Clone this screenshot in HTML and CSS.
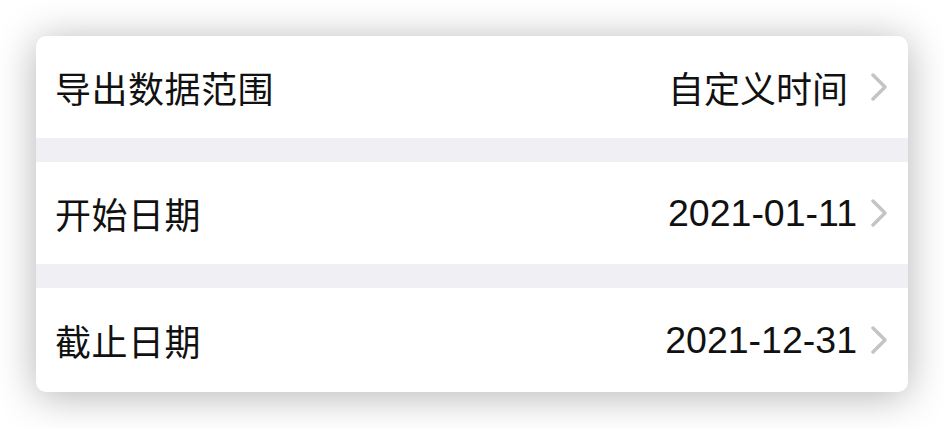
FILE: index.html
```html
<!DOCTYPE html>
<html lang="zh-CN">
<head>
<meta charset="utf-8">
<title>导出数据</title>
<link rel="stylesheet" href="styles.css">
</head>
<body>
<div class="card">
  <div class="row">
    <span class="label">导出数据范围</span>
    <span class="value">自定义时间<svg class="chev" width="18" height="28" viewBox="0 0 18 28"><path d="M3 2 L15 14 L3 26" fill="none" stroke="#c4c4c8" stroke-width="3.4" stroke-linecap="round" stroke-linejoin="round"/></svg></span>
  </div>
  <div class="gap"></div>
  <div class="row">
    <span class="label">开始日期</span>
    <span class="value num">2021-01-11<svg class="chev" width="18" height="28" viewBox="0 0 18 28"><path d="M3 2 L15 14 L3 26" fill="none" stroke="#c4c4c8" stroke-width="3.4" stroke-linecap="round" stroke-linejoin="round"/></svg></span>
  </div>
  <div class="gap"></div>
  <div class="row">
    <span class="label">截止日期</span>
    <span class="value num">2021-12-31<svg class="chev" width="18" height="28" viewBox="0 0 18 28"><path d="M3 2 L15 14 L3 26" fill="none" stroke="#c4c4c8" stroke-width="3.4" stroke-linecap="round" stroke-linejoin="round"/></svg></span>
  </div>
</div>
</body>
</html>
```
FILE: styles.css
```css
html, body {
  margin: 0;
  padding: 0;
  background: #ffffff;
}
body {
  min-height: 100vh;
  box-sizing: border-box;
  padding: 36px 36px 0 36px;
  font-family: "Liberation Sans", "Noto Sans CJK SC", sans-serif;
  color: #111111;
}
.card {
  width: 872px;
  background: #ffffff;
  border-radius: 10px;
  overflow: hidden;
  box-shadow: 0 4px 40px rgba(0, 0, 0, 0.3);
}
.row {
  height: 102px;
  display: flex;
  align-items: center;
  justify-content: space-between;
  padding: 0 20px 0 19px;
  font-size: 36px;
}
.row:last-child {
  height: 104px;
}
.gap {
  height: 24px;
  background: #efeff4;
}
.label {
  letter-spacing: 0.5px;
}
.value {
  display: flex;
  align-items: center;
}
.num {
  font-size: 37.5px;
}
.chev {
  margin-left: 13px;
  display: block;
}
.value:not(.num) .chev {
  margin-left: 22px;
}
```
